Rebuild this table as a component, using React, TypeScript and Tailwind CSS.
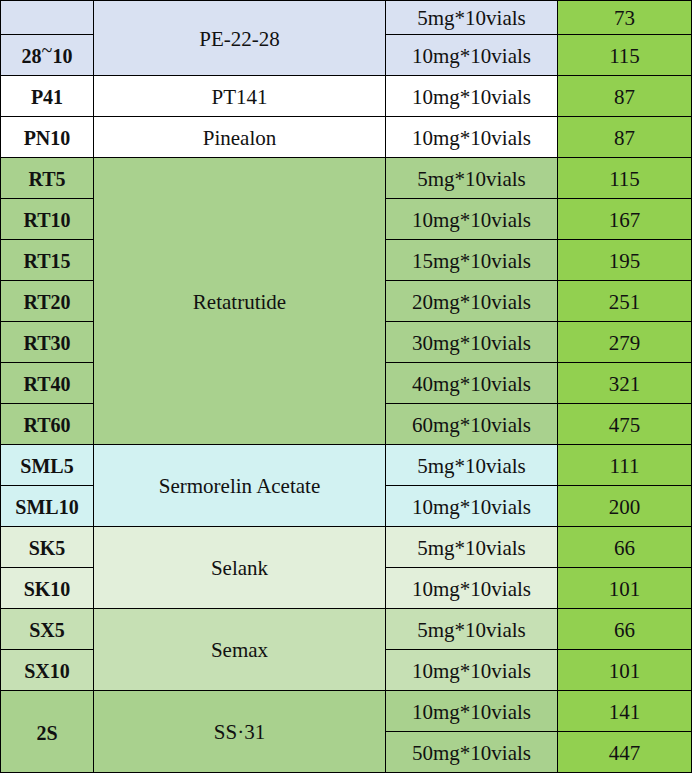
import React from "react";

const LAV = "bg-[#d9e1f2]";
const WHITE = "bg-white";
const RT = "bg-[#a9d18e]";
const CY = "bg-[#d2f2f2]";
const SK = "bg-[#e2efda]";
const SX = "bg-[#c6e0b4]";
const PRICE = "bg-[#92d050]";

function Cell({
  children,
  className = "",
  bold = false,
}: {
  children?: React.ReactNode;
  className?: string;
  bold?: boolean;
}) {
  return (
    <div
      className={`flex items-center justify-center pt-[2px] leading-none text-[#111] font-['Liberation_Serif','Times_New_Roman',serif] ${
        bold ? "font-bold text-[20px]" : "font-normal text-[21px]"
      } ${className}`}
    >
      {children}
    </div>
  );
}

export default function App() {
  return (
    <div className="w-[693px] h-[774px] bg-white font-['Liberation_Serif','Times_New_Roman',serif]">
      <div className="inline-grid grid-cols-[92px_291px_171px_133px] grid-rows-[33px_repeat(18,40px)] gap-px bg-black p-px">
        {/* PE-22-28 */}
        <Cell className={`${LAV} col-start-1 row-start-1`} bold />
        <Cell className={`${LAV} col-start-2 row-start-1 row-span-2`}>PE-22-28</Cell>
        <Cell className={`${LAV} col-start-3 row-start-1`}>5mg*10vials</Cell>
        <Cell className={`${PRICE} col-start-4 row-start-1`}>73</Cell>
        <Cell className={`${LAV} col-start-1 row-start-2`} bold>
          28<span className="relative -top-[6px] font-normal">~</span>10
        </Cell>
        <Cell className={`${LAV} col-start-3 row-start-2`}>10mg*10vials</Cell>
        <Cell className={`${PRICE} col-start-4 row-start-2`}>115</Cell>

        {/* PT141 */}
        <Cell className={`${WHITE} col-start-1 row-start-3`} bold>P41</Cell>
        <Cell className={`${WHITE} col-start-2 row-start-3`}>PT141</Cell>
        <Cell className={`${WHITE} col-start-3 row-start-3`}>10mg*10vials</Cell>
        <Cell className={`${PRICE} col-start-4 row-start-3`}>87</Cell>

        {/* Pinealon */}
        <Cell className={`${WHITE} col-start-1 row-start-4`} bold>PN10</Cell>
        <Cell className={`${WHITE} col-start-2 row-start-4`}>Pinealon</Cell>
        <Cell className={`${WHITE} col-start-3 row-start-4`}>10mg*10vials</Cell>
        <Cell className={`${PRICE} col-start-4 row-start-4`}>87</Cell>

        {/* Retatrutide */}
        <Cell className={`${RT} col-start-2 row-start-5 row-span-7`}>Retatrutide</Cell>
        <Cell className={`${RT} col-start-1 row-start-5`} bold>RT5</Cell>
        <Cell className={`${RT} col-start-3 row-start-5`}>5mg*10vials</Cell>
        <Cell className={`${PRICE} col-start-4 row-start-5`}>115</Cell>
        <Cell className={`${RT} col-start-1 row-start-6`} bold>RT10</Cell>
        <Cell className={`${RT} col-start-3 row-start-6`}>10mg*10vials</Cell>
        <Cell className={`${PRICE} col-start-4 row-start-6`}>167</Cell>
        <Cell className={`${RT} col-start-1 row-start-7`} bold>RT15</Cell>
        <Cell className={`${RT} col-start-3 row-start-7`}>15mg*10vials</Cell>
        <Cell className={`${PRICE} col-start-4 row-start-7`}>195</Cell>
        <Cell className={`${RT} col-start-1 row-start-8`} bold>RT20</Cell>
        <Cell className={`${RT} col-start-3 row-start-8`}>20mg*10vials</Cell>
        <Cell className={`${PRICE} col-start-4 row-start-8`}>251</Cell>
        <Cell className={`${RT} col-start-1 row-start-9`} bold>RT30</Cell>
        <Cell className={`${RT} col-start-3 row-start-9`}>30mg*10vials</Cell>
        <Cell className={`${PRICE} col-start-4 row-start-9`}>279</Cell>
        <Cell className={`${RT} col-start-1 row-start-10`} bold>RT40</Cell>
        <Cell className={`${RT} col-start-3 row-start-10`}>40mg*10vials</Cell>
        <Cell className={`${PRICE} col-start-4 row-start-10`}>321</Cell>
        <Cell className={`${RT} col-start-1 row-start-11`} bold>RT60</Cell>
        <Cell className={`${RT} col-start-3 row-start-11`}>60mg*10vials</Cell>
        <Cell className={`${PRICE} col-start-4 row-start-11`}>475</Cell>

        {/* Sermorelin */}
        <Cell className={`${CY} col-start-2 row-start-12 row-span-2`}>Sermorelin Acetate</Cell>
        <Cell className={`${CY} col-start-1 row-start-12`} bold>SML5</Cell>
        <Cell className={`${CY} col-start-3 row-start-12`}>5mg*10vials</Cell>
        <Cell className={`${PRICE} col-start-4 row-start-12`}>111</Cell>
        <Cell className={`${CY} col-start-1 row-start-13`} bold>SML10</Cell>
        <Cell className={`${CY} col-start-3 row-start-13`}>10mg*10vials</Cell>
        <Cell className={`${PRICE} col-start-4 row-start-13`}>200</Cell>

        {/* Selank */}
        <Cell className={`${SK} col-start-2 row-start-14 row-span-2`}>Selank</Cell>
        <Cell className={`${SK} col-start-1 row-start-14`} bold>SK5</Cell>
        <Cell className={`${SK} col-start-3 row-start-14`}>5mg*10vials</Cell>
        <Cell className={`${PRICE} col-start-4 row-start-14`}>66</Cell>
        <Cell className={`${SK} col-start-1 row-start-15`} bold>SK10</Cell>
        <Cell className={`${SK} col-start-3 row-start-15`}>10mg*10vials</Cell>
        <Cell className={`${PRICE} col-start-4 row-start-15`}>101</Cell>

        {/* Semax */}
        <Cell className={`${SX} col-start-2 row-start-16 row-span-2`}>Semax</Cell>
        <Cell className={`${SX} col-start-1 row-start-16`} bold>SX5</Cell>
        <Cell className={`${SX} col-start-3 row-start-16`}>5mg*10vials</Cell>
        <Cell className={`${PRICE} col-start-4 row-start-16`}>66</Cell>
        <Cell className={`${SX} col-start-1 row-start-17`} bold>SX10</Cell>
        <Cell className={`${SX} col-start-3 row-start-17`}>10mg*10vials</Cell>
        <Cell className={`${PRICE} col-start-4 row-start-17`}>101</Cell>

        {/* SS-31 */}
        <Cell className={`${RT} col-start-1 row-start-18 row-span-2`} bold>2S</Cell>
        <Cell className={`${RT} col-start-2 row-start-18 row-span-2`}>SS·31</Cell>
        <Cell className={`${RT} col-start-3 row-start-18`}>10mg*10vials</Cell>
        <Cell className={`${PRICE} col-start-4 row-start-18`}>141</Cell>
        <Cell className={`${RT} col-start-3 row-start-19`}>50mg*10vials</Cell>
        <Cell className={`${PRICE} col-start-4 row-start-19`}>447</Cell>
      </div>
    </div>
  );
}
